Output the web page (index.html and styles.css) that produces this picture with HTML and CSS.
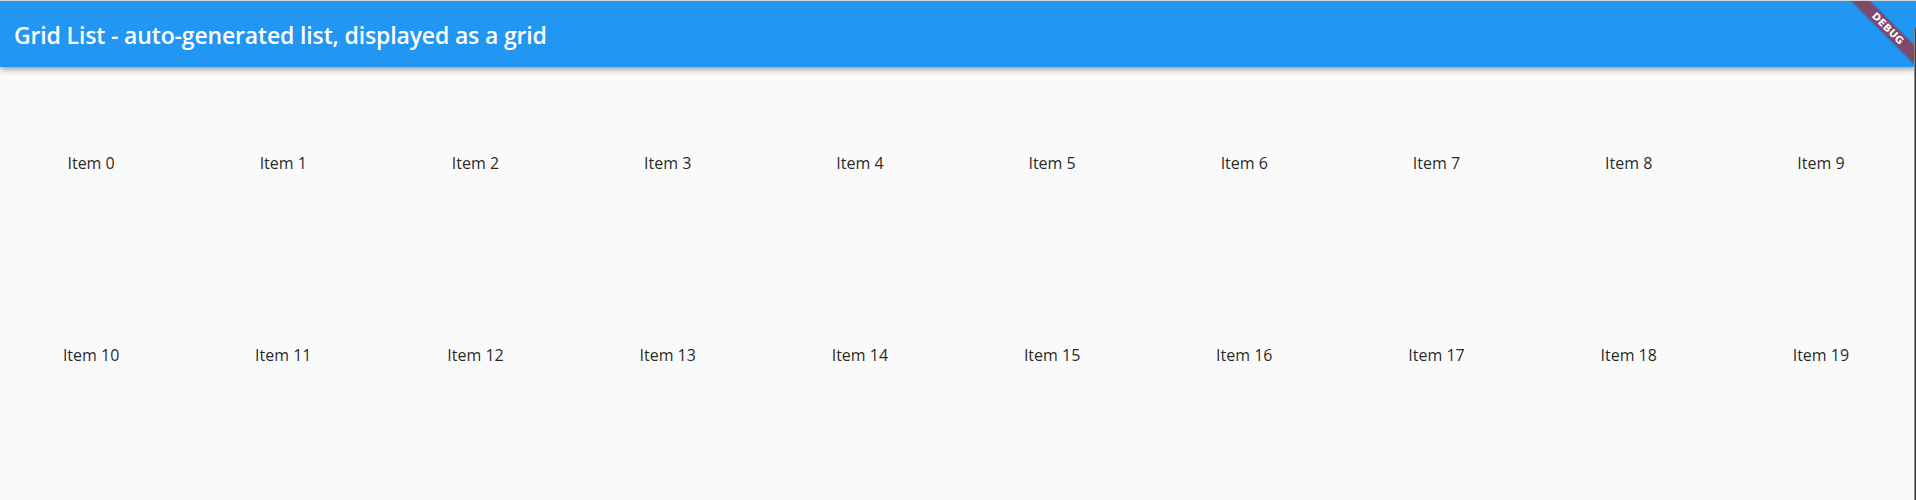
FILE: index.html
```html
<!DOCTYPE html>
<html lang="en">
<head>
<meta charset="utf-8">
<title>Grid List</title>
<link rel="stylesheet" href="styles.css">
</head>
<body>
<div class="window">
  <header class="app-bar">
    <h1 class="app-title">Grid List - auto-generated list, displayed as a grid</h1>
  </header>
  <main class="grid">
    <div class="cell">Item 0</div>
    <div class="cell">Item 1</div>
    <div class="cell">Item 2</div>
    <div class="cell">Item 3</div>
    <div class="cell">Item 4</div>
    <div class="cell">Item 5</div>
    <div class="cell">Item 6</div>
    <div class="cell">Item 7</div>
    <div class="cell">Item 8</div>
    <div class="cell">Item 9</div>
    <div class="cell">Item 10</div>
    <div class="cell">Item 11</div>
    <div class="cell">Item 12</div>
    <div class="cell">Item 13</div>
    <div class="cell">Item 14</div>
    <div class="cell">Item 15</div>
    <div class="cell">Item 16</div>
    <div class="cell">Item 17</div>
    <div class="cell">Item 18</div>
    <div class="cell">Item 19</div>
  </main>
  <div class="banner-clip">
    <div class="debug-banner">DEBUG</div>
  </div>
  <div class="frame-edge"></div>
</div>
</body>
</html>
```
FILE: styles.css
```css
html, body {
  margin: 0;
  padding: 0;
  height: 100%;
  overflow: hidden;
  background: #fafafa;
}

.window {
  position: relative;
  height: 500px;
  border-top: 1px solid #d4d4d4;
  box-sizing: border-box;
  overflow: hidden;
  font-family: "Open Sans", "Noto Sans", sans-serif;
}

.app-bar {
  position: relative;
  z-index: 2;
  height: 66px;
  background: #2196f3;
  display: flex;
  align-items: center;
  padding-left: 14px;
  box-shadow: 0 2px 4px -1px rgba(0,0,0,0.2), 0 4px 5px 0 rgba(0,0,0,0.14), 0 1px 10px 0 rgba(0,0,0,0.12);
}

.app-title {
  margin: 0;
  padding-top: 2px;
  font-size: 23px;
  font-weight: 600;
  color: #ffffff;
  letter-spacing: -0.15px;
  white-space: nowrap;
}

.grid {
  display: grid;
  grid-template-columns: repeat(10, 1fr);
  grid-auto-rows: 192px;
  width: 1922px;
  margin-left: -5px;
}

.cell {
  display: flex;
  align-items: center;
  justify-content: center;
  font-size: 16px;
  color: rgba(0,0,0,0.87);
}

.banner-clip {
  position: absolute;
  top: 0;
  right: 2px;
  width: 80px;
  height: 67px;
  overflow: hidden;
  z-index: 3;
}

.debug-banner {
  position: absolute;
  left: -1px;
  top: 20.5px;
  width: 110px;
  height: 13px;
  transform: rotate(45deg);
  transform-origin: 50% 50%;
  background: rgb(127, 73, 108);
  color: #ffffff;
  font-family: "DejaVu Sans", sans-serif;
  font-weight: 700;
  font-size: 10px;
  line-height: 13px;
  text-align: center;
  letter-spacing: 0.3px;
  box-shadow: 0 0 2px rgba(0,0,0,0.25);
}

.frame-edge {
  position: absolute;
  top: 27px;
  right: 0;
  width: 2px;
  bottom: 0;
  background: linear-gradient(to right, #8a8a8a 0 50%, #3a3a3a 50% 100%);
  z-index: 4;
}
```
